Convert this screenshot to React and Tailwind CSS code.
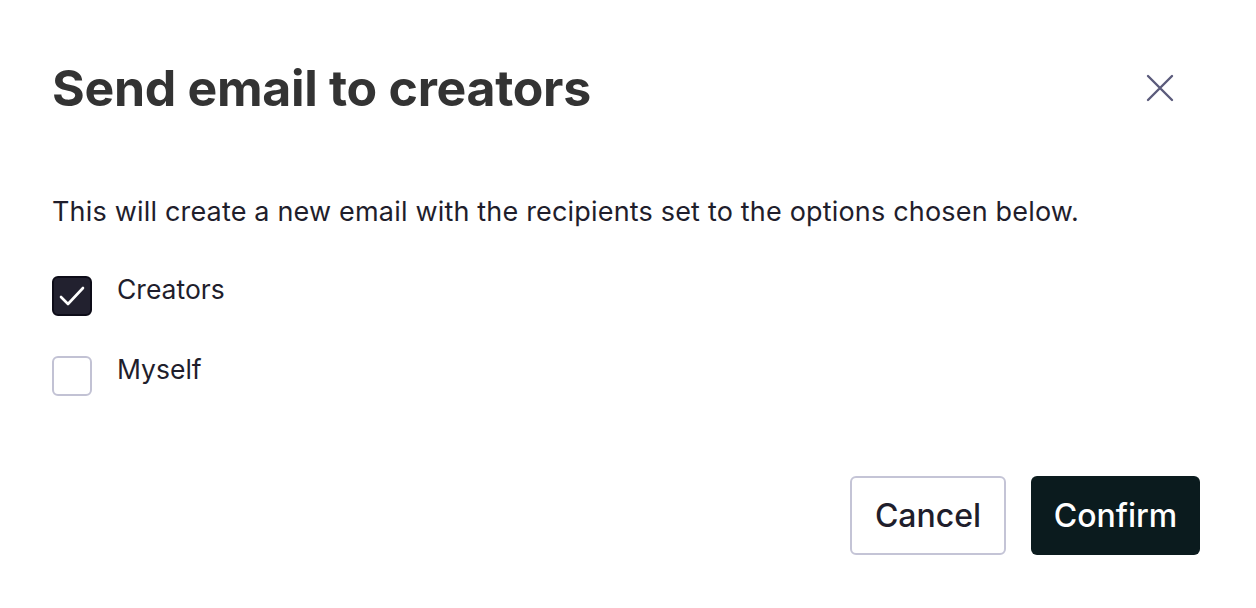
import React from "react";

export default function App() {
  return (
    <div className="w-[1256px] h-[608px] bg-white" style={{ fontFamily: "Inter, 'Noto Sans', sans-serif" }}>
      <div className="pl-[52px] pr-[56px] pt-[58px]">
        <div className="flex items-start justify-between">
          <h1 className="text-[50px] leading-[60px] font-bold text-[#333333] tracking-[-0.3px]">Send email to creators</h1>
          <button className="mt-[10px] mr-[20px] w-[40px] h-[40px] flex items-center justify-center text-[#5b5b7b]">
            <svg width="28" height="28" viewBox="0 0 28 28" fill="none" stroke="currentColor" strokeWidth="2.4" strokeLinecap="round">
              <path d="M2 2L26 26M26 2L2 26" />
            </svg>
          </button>
        </div>
        <p className="mt-[78px] text-[27px] leading-[32px] text-[#1f1e2c] tracking-[0.18px]">This will create a new email with the recipients set to the options chosen below.</p>
        <div className="mt-[48px] flex flex-col gap-[40px]">
          <label className="flex items-center gap-[25px]">
            <span className="w-[40px] h-[40px] rounded-[6px] bg-[#22212f] border-2 border-[#0d0c18] flex items-center justify-center">
              <svg width="30" height="30" viewBox="0 0 30 30" fill="none" stroke="white" strokeWidth="2.6" strokeLinecap="round" strokeLinejoin="round">
                <path d="M4 16L11 23L26 7" />
              </svg>
            </span>
            <span className="text-[26.5px] text-[#1f1e2c] -mt-[12px]">Creators</span>
          </label>
          <label className="flex items-center gap-[25px]">
            <span className="w-[40px] h-[40px] rounded-[6px] bg-white border-2 border-[#c2c2d4]"></span>
            <span className="text-[26.5px] text-[#1f1e2c] -mt-[12px]">Myself</span>
          </label>
        </div>
        <div className="mt-[80px] flex justify-end gap-[25px]">
          <button className="w-[156px] h-[79px] rounded-[6px] border-2 border-[#c4c4d6] bg-white text-[32px] font-medium text-[#1f1e2c]">Cancel</button>
          <button className="w-[169px] h-[79px] rounded-[6px] bg-[#0b1b1e] text-[32px] font-medium text-white">Confirm</button>
        </div>
      </div>
    </div>
  );
}
